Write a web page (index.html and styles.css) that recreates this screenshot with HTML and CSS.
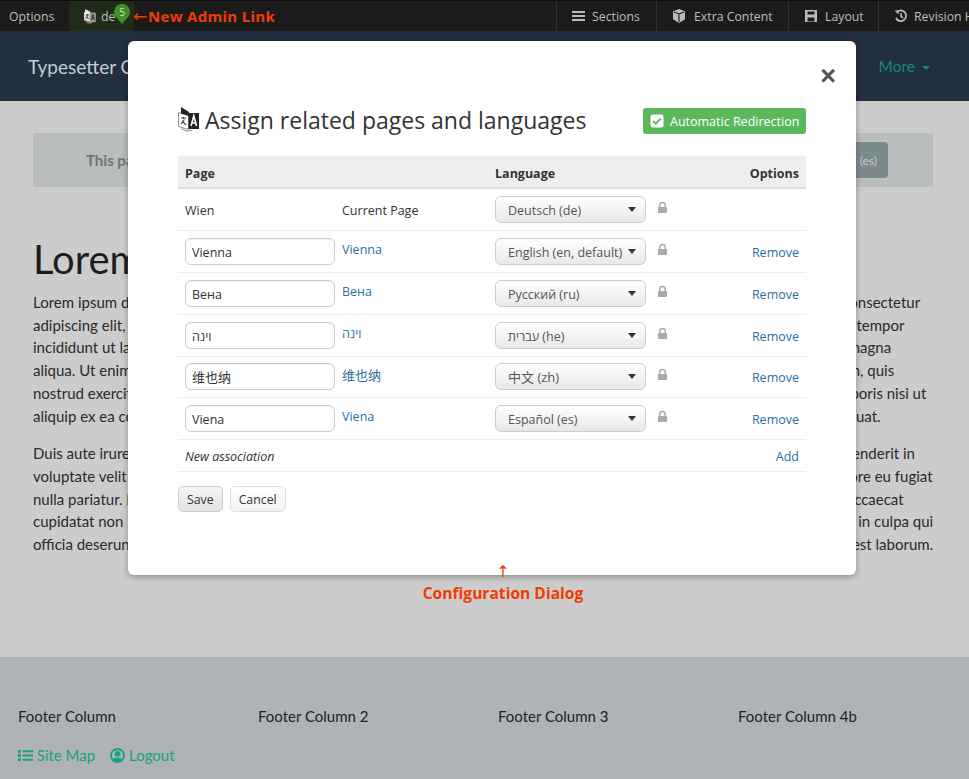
FILE: index.html
```html
<!DOCTYPE html>
<html lang="en">
<head>
<meta charset="utf-8">
<title>Assign related pages and languages</title>
<link rel="stylesheet" href="styles.css">
</head>
<body>
<div class="adminbar">
  <a class="ab-item ab-options">Options</a>
  <a class="ab-item ab-lang">
    <svg class="ab-trans" viewBox="0 0 22 25" width="13" height="15"><path d="M0 5l10 3v14L0 19z" fill="#d8d8d8"/><path d="M2 0l9 5v3H2z" fill="#eee"/><path d="M10 6h10v16H10z" fill="#999"/><path d="M3 10h5M5.500 9v2M3 16l3.500-4M4 13l4 4" stroke="#222" stroke-width="1.500" fill="none"/><path d="M12.500 19l2.500-10 2.500 10M13.500 16h3" stroke="#222" stroke-width="1.500" fill="none"/><path d="M3 21q5 4 11 2" stroke="#ddd" stroke-width="1.200" fill="none"/></svg>
    <span>de</span>
  </a>
  <span class="ab-spacer"></span>
  <a class="ab-item ab-right ab-sections"><svg class="ab-ico" viewBox="0 0 14 12"><path d="M0 1h13v2H0zM0 5h13v2H0zM0 9h13v2H0z" fill="#bbb"/></svg>Sections</a>
  <a class="ab-item ab-right ab-extra"><svg class="ab-ico" viewBox="0 0 14 14"><path d="M7 0l6 2.300v8L7 14l-6-3.700v-8z" fill="#bbb"/><path d="M2 3l5 2 5-2M7 5v8" stroke="#1c1c1c" stroke-width="1.100" fill="none"/></svg>Extra Content</a>
  <a class="ab-item ab-right ab-layout"><svg class="ab-ico" viewBox="0 0 14 14"><path d="M1 1h12v12H1z" fill="#bbb"/><path d="M3.500 2.500h7v3h-7zM3.500 8.500h7v4h-7z" fill="#1c1c1c"/></svg>Layout</a>
  <a class="ab-item ab-right ab-revision"><svg class="ab-ico" viewBox="0 0 14 14"><path d="M3 3a5.300 5.300 0 1 1-1 6" stroke="#bbb" stroke-width="1.800" fill="none"/><path d="M0.500 1.500h4v4z" fill="#bbb"/><path d="M7 4v3.500l2.200 1.300" stroke="#bbb" stroke-width="1.500" fill="none"/></svg>Revision History</a>
</div>

<header class="site-head">
  <span class="brand">Typesetter CMS</span>
  <nav class="nav">
    <a class="nav-link">Features <i class="caret caret-light"></i></a>
    <a class="nav-link nav-active">More <i class="caret"></i></a>
  </nav>
</header>

<main class="main">
  <div class="notice">
    <span class="notice-text">This page is also available in other languages</span>
    <span class="notice-btn">Español (es)</span>
  </div>
  <h1 class="page-title">Lorem Ipsum</h1>
  <p class="para">Lorem ipsum dolor sit amet, consectetur adipiscing elit, sed do eiusmod tempor incididunt ut labore et dolore magna aliqua, consectetur<br>adipiscing elit, sed do eiusmod tempor incididunt ut labore et dolore magna aliqua. Ut enim ad minim veniam, sed do eiusmod tempor<br>incididunt ut labore et dolore magna aliqua. Ut enim ad minim veniam, quis nostrud exercitation ullamco laboris ea ut aliquip magna<br>aliqua. Ut enim ad minim veniam, quis nostrud exercitation ullamco laboris nisi ut aliquip ex ea commodo consequat, ut veniam, quis<br>nostrud exercitation ullamco laboris nisi ut aliquip ex ea commodo consequat. Quis nostrud exercitation ullamco commodo laboris nisi ut<br>aliquip ex ea commodo consequat. Ut enim ad minim veniam, quis nostrud exercitation ullamco laboris ut aliquip ex ea consequat.</p>
  <p class="para">Duis aute irure dolor in reprehenderit in voluptate velit esse cillum dolore eu fugiat nulla pariatur. Duis aute irure dolor reprehenderit in<br>voluptate velit esse cillum dolore eu fugiat nulla pariatur. Excepteur sint occaecat cupidatat non proident, nunc sint cillum dolore eu fugiat<br>nulla pariatur. Excepteur sint occaecat cupidatat non proident, sunt in culpa qui officia deserunt mollit anim id esse laborum, occaecat<br>cupidatat non proident, sunt in culpa qui officia deserunt mollit anim id est laborum. Excepteur sint occaecat ad proident, sunt in culpa qui<br>officia deserunt mollit anim id est laborum. Excepteur sint occaecat cupidatat non proident, sit in culpa qui officia deserunt id est laborum.</p>
</main>

<footer class="foot">
  <div class="foot-cols">
    <div>Footer Column</div>
    <div>Footer Column 2</div>
    <div>Footer Column 3</div>
    <div>Footer Column 4b</div>
  </div>
  <div class="foot-links">
    <a><svg class="foot-ico" viewBox="0 0 16 14"><path d="M0 1h3v3H0zM0 5.500h3v3H0zM0 10h3v3H0zM5 1.500h11v2H5zM5 6h11v2H5zM5 10.500h11v2H5z" fill="#16a085"/></svg> Site Map</a>
    <a><svg class="foot-ico" viewBox="0 0 16 16"><circle cx="8" cy="8" r="7" fill="none" stroke="#16a085" stroke-width="2"/><circle cx="8" cy="6.200" r="3" fill="#16a085"/><path d="M3 12.500c1-3 9-3 10 0l-2 2H5z" fill="#16a085"/></svg> Logout</a>
  </div>
</footer>

<div class="badge"><svg class="badge-pin" viewBox="0 0 16 20"><path d="M8 20L1.500 12.500A8 8 0 1 1 14.500 12.500z" fill="#3e8e2a"/></svg><span class="badge-num">5</span></div>
<div class="note-link"><span class="note-link-arrow">←</span>New Admin Link</div>

<section class="modal">
  <button class="close" type="button">×</button>
  <div class="modal-head">
    <h2 class="modal-title">
      <svg class="title-ico" viewBox="0 0 22 25" width="22" height="25"><path d="M.5 5.500l10 3v14l-10-3z" fill="#fff" stroke="#777" stroke-width=".8"/><path d="M3 0l8 5v4L3 6.500z" fill="#222"/><path d="M10.500 6H21v16H10.500z" fill="#222"/><path d="M3 11h5M5.500 10v2M3 17l3.500-4.500M4 14l4 4" stroke="#444" stroke-width="1.100" fill="none"/><path d="M13 19l2.800-10 2.800 10M14 16h3.500" stroke="#fff" stroke-width="1.600" fill="none"/><path d="M3 21.500q5 4 11 2" stroke="#888" stroke-width="1" fill="none"/></svg>
      Assign related pages and languages
    </h2>
    <a class="btn-auto"><svg class="check" viewBox="0 0 14 14"><rect width="13" height="13" x=".5" y=".5" rx="2.500" fill="#fff"/><path d="M3.200 7l2.600 2.600 5-5" stroke="#5cb85c" stroke-width="2" fill="none"/></svg>Automatic Redirection</a>
  </div>

  <table class="assoc">
    <colgroup><col class="c1"><col class="c2"><col class="c3"><col class="c4"></colgroup>
    <thead>
      <tr><th colspan="2">Page</th><th>Language</th><th class="right">Options</th></tr>
    </thead>
    <tbody>
      <tr><td>Wien</td><td>Current Page</td>
        <td><div class="lang"><div class="sel">Deutsch (de)<i class="sel-caret"></i></div><svg class="lock" viewBox="0 0 12 14"><path d="M3 6V4a3 3 0 0 1 6 0v2" stroke="#aaa" stroke-width="1.600" fill="none"/><rect x="1" y="6" width="10" height="6.500" rx="1" fill="#aaa"/></svg></div></td><td></td></tr>
      <tr><td><div class="inp">Vienna</div></td><td><a class="link up">Vienna</a></td>
        <td><div class="lang"><div class="sel">English (en, default)<i class="sel-caret"></i></div><svg class="lock" viewBox="0 0 12 14"><path d="M3 6V4a3 3 0 0 1 6 0v2" stroke="#aaa" stroke-width="1.600" fill="none"/><rect x="1" y="6" width="10" height="6.500" rx="1" fill="#aaa"/></svg></div></td><td class="right"><a class="link">Remove</a></td></tr>
      <tr><td><div class="inp">Вена</div></td><td><a class="link up">Вена</a></td>
        <td><div class="lang"><div class="sel">Русский (ru)<i class="sel-caret"></i></div><svg class="lock" viewBox="0 0 12 14"><path d="M3 6V4a3 3 0 0 1 6 0v2" stroke="#aaa" stroke-width="1.600" fill="none"/><rect x="1" y="6" width="10" height="6.500" rx="1" fill="#aaa"/></svg></div></td><td class="right"><a class="link">Remove</a></td></tr>
      <tr><td><div class="inp">וינה</div></td><td><a class="link up">וינה</a></td>
        <td><div class="lang"><div class="sel">עברית (he)<i class="sel-caret"></i></div><svg class="lock" viewBox="0 0 12 14"><path d="M3 6V4a3 3 0 0 1 6 0v2" stroke="#aaa" stroke-width="1.600" fill="none"/><rect x="1" y="6" width="10" height="6.500" rx="1" fill="#aaa"/></svg></div></td><td class="right"><a class="link">Remove</a></td></tr>
      <tr class="short"><td><div class="inp cjk">维也纳</div></td><td><a class="link up cjk">维也纳</a></td>
        <td><div class="lang"><div class="sel cjk">中文 (zh)<i class="sel-caret"></i></div><svg class="lock" viewBox="0 0 12 14"><path d="M3 6V4a3 3 0 0 1 6 0v2" stroke="#aaa" stroke-width="1.600" fill="none"/><rect x="1" y="6" width="10" height="6.500" rx="1" fill="#aaa"/></svg></div></td><td class="right"><a class="link">Remove</a></td></tr>
      <tr><td><div class="inp">Viena</div></td><td><a class="link up">Viena</a></td>
        <td><div class="lang"><div class="sel">Español (es)<i class="sel-caret"></i></div><svg class="lock" viewBox="0 0 12 14"><path d="M3 6V4a3 3 0 0 1 6 0v2" stroke="#aaa" stroke-width="1.600" fill="none"/><rect x="1" y="6" width="10" height="6.500" rx="1" fill="#aaa"/></svg></div></td><td class="right"><a class="link">Remove</a></td></tr>
      <tr class="new"><td colspan="3"><em>New association</em></td><td class="right"><a class="link">Add</a></td></tr>
    </tbody>
  </table>
  <div class="actions">
    <button class="btn btn-save" type="button">Save</button>
    <button class="btn" type="button">Cancel</button>
  </div>
</section>

<div class="note-dialog"><div class="note-arrow">↑</div><div>Configuration Dialog</div></div>
</body>
</html>
```
FILE: styles.css
```css
* { box-sizing: border-box; }
html, body { margin: 0; padding: 0; }
body {
  width: 969px;
  height: 779px;
  overflow: hidden;
  position: relative;
  background: #cccccc;
  font-family: Lato, "Liberation Sans", sans-serif;
  color: #1f1f1f;
}

/* admin bar */
.adminbar {
  height: 31px;
  display: flex;
  background: #1b1b1b;
  border-top: 1px solid #0c0c0c;
  font-family: "Open Sans", sans-serif;
  font-size: 12.3px;
  color: #bdbdbd;
}
.ab-item { display: flex; align-items: center; height: 30px; white-space: nowrap; }
.ab-options { width: 69px; padding-left: 9px; }
.ab-lang { width: 65px; padding-left: 15px; background: #1f2d18; gap: 4px; }
.ab-spacer { flex: 1; }
.ab-right { border-left: 1px solid #333; padding-left: 15px; overflow: hidden; }
.ab-sections { width: 100px; }
.ab-extra { width: 132px; }
.ab-layout { width: 90px; }
.ab-revision { width: 91px; }
.ab-ico { width: 14px; height: 14px; margin-right: 6px; flex: none; }
.ab-extra .ab-ico { margin-right: 8px; }
.ab-layout .ab-ico { margin-right: 7px; }

/* site header */
.site-head {
  height: 70px;
  background: #222f3e;
  display: flex;
  align-items: center;
  justify-content: space-between;
  padding: 0 39px 0 28px;
}
.brand { font-size: 19px; color: #c4ced6; }
.nav { display: flex; gap: 30px; font-size: 15.5px; }
.nav-link { color: #bcc5cc; }
.nav-active { color: #118a74; }
.caret {
  display: inline-block;
  border-left: 4px solid transparent;
  border-right: 4px solid transparent;
  border-top: 4px solid #118a74;
  vertical-align: middle;
  margin-left: 3px;
}
.caret-light { border-top-color: #bcc5cc; }

/* main */
.main { height: 556px; padding: 32px 36px 0 33px; overflow: hidden; }
.notice {
  height: 54px;
  background: #b9bdbd;
  display: flex;
  align-items: center;
  justify-content: space-between;
  padding: 0 45px 0 53px;
  font-size: 15px;
  color: #6e7677;
}
.notice-text { font-weight: 700; }
.notice-btn {
  height: 36px;
  display: flex;
  align-items: center;
  padding: 0 11px;
  background: #7c8a8c;
  border-radius: 4px;
  color: #c4cbcc;
  font-size: 12px;
}
.page-title { margin: 48px 0 8px; font-size: 40px; font-weight: 400; line-height: 48px; color: #1d1d1d; }
.para { margin: 0 0 15px; font-size: 15px; line-height: 22.700px; white-space: nowrap; color: #2a2a2a; }

/* footer */
.foot { height: 122px; background: #afb3b6; padding: 49px 18px 0; font-size: 15px; }
.foot-cols { display: grid; grid-template-columns: repeat(4, 240px); line-height: 20px; color: #222; }
.foot-links { display: flex; gap: 15px; margin-top: 19px; line-height: 20px; }
.foot-links a { color: #16a085; white-space: nowrap; }
.foot-ico { width: 15px; height: 15px; vertical-align: -2px; }

/* overlays */
.badge { position: absolute; left: 114px; top: 4px; width: 16px; height: 20px; }
.badge-pin { display: block; width: 16px; height: 20px; }
.badge-num { position: absolute; left: 0; top: 1px; width: 16px; text-align: center; font: 10px/14px "Open Sans", sans-serif; color: #cfe3c9; }
.note-link {
  position: absolute; left: 133px; top: 6px;
  display: flex; align-items: center;
  font: 700 15px/20px "Open Sans", sans-serif;
  color: #f23b00;
  letter-spacing: .3px;
  white-space: nowrap;
}
.note-link-arrow { width: 15px; font: 400 17px/20px "DejaVu Sans", sans-serif; letter-spacing: 0; }
.note-dialog {
  position: absolute; left: 403px; top: 562px; width: 200px;
  text-align: center;
  font: 700 15.600px/20px "Open Sans", sans-serif;
  color: #f23b00;
}
.note-arrow { font: 400 16px/20px "DejaVu Sans", sans-serif; margin-bottom: 1px; }

/* modal */
.modal {
  position: absolute; left: 128px; top: 41px;
  width: 728px; height: 534px;
  background: #fff;
  border-radius: 6px;
  box-shadow: 0 2px 6px rgba(0,0,0,.3);
  padding: 67px 50px 0;
  font-family: "Open Sans", "Noto Sans CJK SC", sans-serif;
  font-size: 12.500px;
  color: #333;
}
.close {
  position: absolute; right: 20px; top: 20px;
  border: 0; background: none; padding: 0;
  font: 700 27px/30px "Liberation Sans", sans-serif;
  color: #555;
}
.modal-head { display: flex; align-items: center; justify-content: space-between; height: 26px; }
.modal-title { margin: -3px 0 0; font-size: 23px; font-weight: 400; line-height: 30px; color: #333; display: flex; align-items: center; gap: 5px; white-space: nowrap; }
.title-ico { flex: none; }
.btn-auto {
  display: flex; align-items: center;
  height: 26px; width: 163px; padding-left: 7px;
  background: #5cb85c;
  border-radius: 3px;
  color: #fff;
  white-space: nowrap;
}
.check { width: 14px; height: 14px; margin-right: 6px; }

.assoc { width: 628px; table-layout: fixed; border-collapse: collapse; margin-top: 22px; }
.c1 { width: 157px; }
.c2 { width: 153px; }
.c3 { width: 226px; }
.assoc th {
  height: 32px;
  background: #eee;
  border-bottom: 2px solid #ddd;
  padding: 3px 7px 0;
  text-align: left;
  font-weight: 700;
}
.assoc td { height: 42px; padding: 2px 7px 0; border-bottom: 1px solid #eee; white-space: nowrap; }
.assoc tr.short td { height: 41px; }
.assoc tr.new td { height: 32px; }
.assoc th.right, .assoc td.right { text-align: right; }
.inp {
  width: 150px; height: 27px;
  margin-top: -2px;
  border: 1px solid #ccc;
  border-radius: 6px;
  padding: 0 6px;
  line-height: 27px;
  box-shadow: inset 0 1px 1px rgba(0,0,0,.05);
  text-align: left;
}
.cjk { font-size: 13px; }
.link { color: #2a6f9e; }
.up { position: relative; top: -3px; }
.lang { display: flex; align-items: flex-start; gap: 11px; margin-top: -2px; }
.sel {
  position: relative;
  width: 151px; height: 27px;
  border: 1px solid #ccc;
  border-radius: 6px;
  padding: 0 12px;
  line-height: 27px;
  background: linear-gradient(#fff, #e8e8e8);
  color: #555;
}
.sel-caret {
  position: absolute; right: 9px; top: 10px;
  border-left: 4px solid transparent;
  border-right: 4px solid transparent;
  border-top: 5px solid #333;
}
.lock { width: 11px; height: 14px; margin-top: 5px; }
em { font-style: italic; }
.actions { display: flex; gap: 7px; margin-top: 14px; }
.btn {
  height: 26px;
  padding: 2px 8px 0;
  border: 1px solid #ddd;
  border-radius: 5px;
  background: linear-gradient(#fff, #f3f3f3);
  font: 12.300px "Open Sans", sans-serif;
  color: #333;
}
.btn-save { background: linear-gradient(#f5f5f5, #e2e2e2); border-color: #ccc; }
```
